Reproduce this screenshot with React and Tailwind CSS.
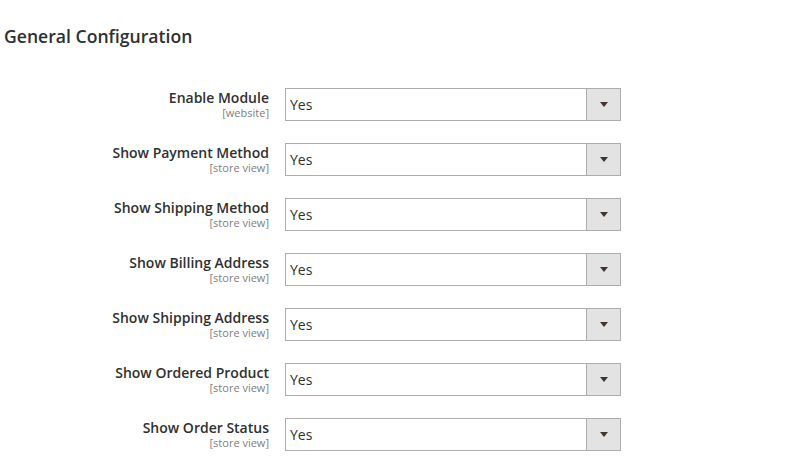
import React from 'react';

const rows = [
  { label: 'Enable Module', scope: '[website]' },
  { label: 'Show Payment Method', scope: '[store view]' },
  { label: 'Show Shipping Method', scope: '[store view]' },
  { label: 'Show Billing Address', scope: '[store view]' },
  { label: 'Show Shipping Address', scope: '[store view]' },
  { label: 'Show Ordered Product', scope: '[store view]' },
  { label: 'Show Order Status', scope: '[store view]' },
];

function SelectBox() {
  return (
    <div className="flex w-[336px] h-[33px] border border-[#adadad] bg-white">
      <div className="flex-1 flex items-center pl-[4px] text-[14px] text-[#303030]">Yes</div>
      <div className="w-[34px] flex items-center justify-center bg-[#e3e3e3] border-l border-[#adadad]">
        <svg width="8" height="5" viewBox="0 0 8 5">
          <path d="M0 0 L8 0 L4 5 Z" fill="#41362f" />
        </svg>
      </div>
    </div>
  );
}

export default function App() {
  return (
    <div className="w-[809px] h-[471px] bg-white overflow-hidden" style={{ fontFamily: '"Open Sans", sans-serif' }}>
      <h2 className="pl-[4px] pt-[25px] text-[17.6px] leading-[22px] font-semibold text-[#303030]">
        General Configuration
      </h2>
      <div className="mt-[41px] flex flex-col gap-[22px]">
        {rows.map((row) => (
          <div key={row.label} className="flex gap-[16px]">
            <div className="w-[269px] text-right pt-[1px]">
              <div className="text-[14px] leading-[17px] font-semibold text-[#303030]">{row.label}</div>
              <div className="text-[11px] leading-[13px] text-[#808080]">{row.scope}</div>
            </div>
            <SelectBox />
          </div>
        ))}
      </div>
    </div>
  );
}
